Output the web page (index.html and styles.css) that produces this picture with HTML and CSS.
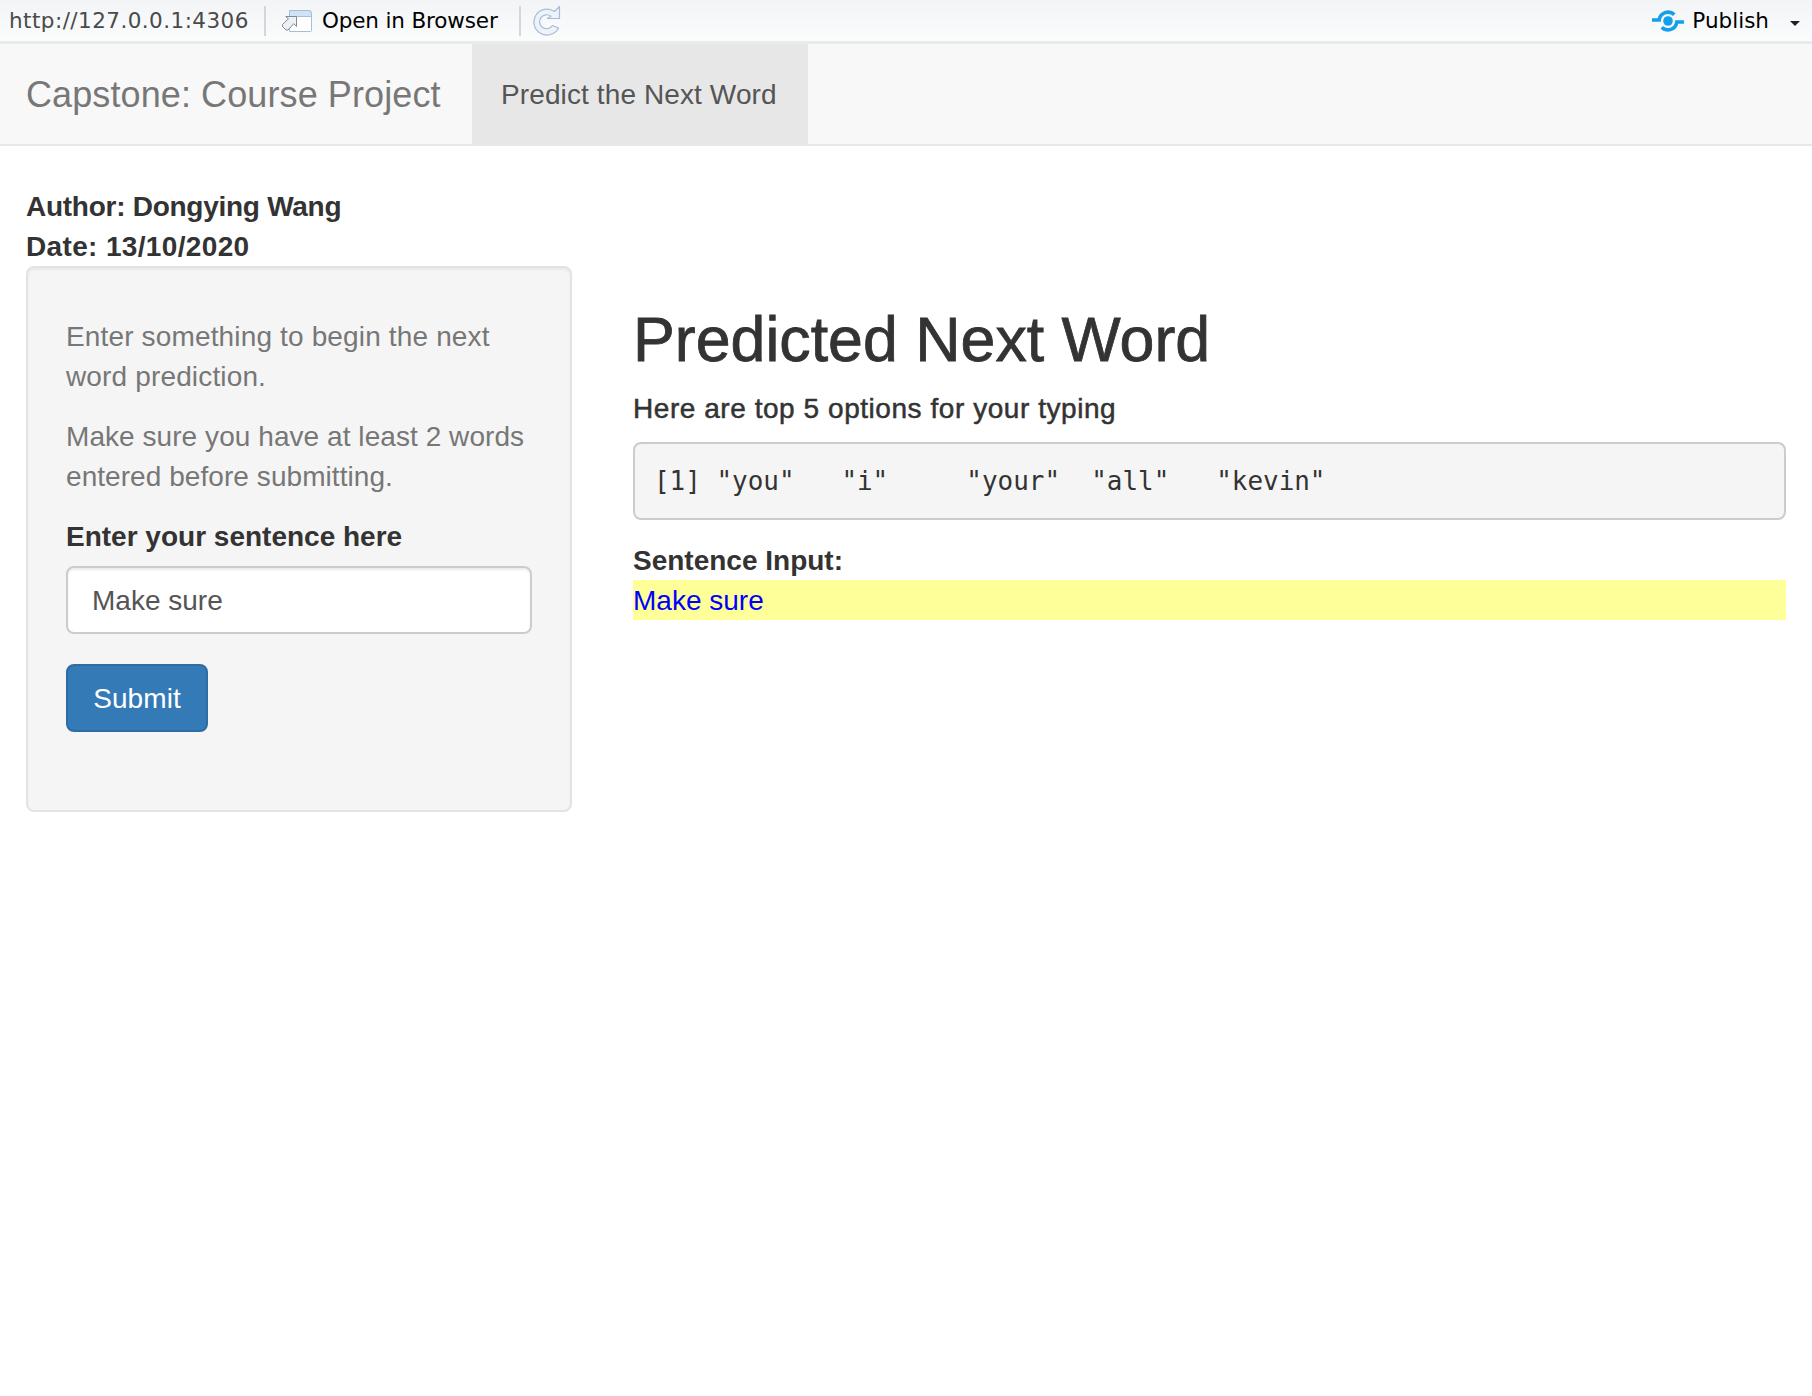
FILE: index.html
```html
<!DOCTYPE html>
<html lang="en">
<head>
    <meta charset="UTF-8">
    <meta name="viewport" content="width=device-width, initial-scale=1.0">
    <title>Capstone: Course Project</title>
    <link rel="stylesheet" href="styles.css">
</head>
<body>
    <div class="toolbar">
        <span class="url">http://127.0.0.1:4306</span>
        <span class="tool-sep"></span>
        <svg class="open-icon" width="31" height="24" viewBox="0 0 31 24">
            <path d="M8.500 1.500h19a3 3 0 0 1 3 3v17a1 1 0 0 1-1 1h-21z" fill="#fff" stroke="#a9bdd2"/>
            <path d="M8.500 1.500h19a3 3 0 0 1 3 3v3h-22z" fill="#cfe2f6" stroke="#a9bdd2"/>
            <path d="M15.500 7.500v10l-2.800-2.800-5.700 6.300h-2l-3.500-3.500v-2l6-5.700-2.800-2.300z" fill="#eef1f4" stroke="#7f8a96"/>
        </svg>
        <span class="open-label">Open in Browser</span>
        <span class="tool-sep tool-sep-2"></span>
        <svg class="reload-icon" width="30" height="31" viewBox="0 0 30 31">
            <path d="M26.500 23A13 13 0 1 1 22.500 6.500L27.500 1.500V13.500H15.500L19 11.300A7 7 0 1 0 20.500 20.500Z" fill="#eef3fa" stroke="#a6bcd8" stroke-width="1.200" stroke-linejoin="round"/>
        </svg>
        <span class="toolbar-gap"></span>
        <svg class="publish-icon" width="34" height="24" viewBox="0 0 34 24">
            <path d="M1 11h7.200A9 9 0 0 1 23.300 5.600" fill="none" stroke="#12a0ec" stroke-width="3.600"/>
            <path d="M33 13h-7.200A9 9 0 0 1 10.700 18.400" fill="none" stroke="#12a0ec" stroke-width="3.600"/>
            <circle cx="17" cy="12" r="4.800" fill="#12a0ec"/>
        </svg>
        <span class="publish-label">Publish</span>
        <span class="caret"></span>
    </div>

    <nav class="navbar">
        <span class="brand">Capstone: Course Project</span>
        <span class="nav-tab">Predict the Next Word</span>
    </nav>

    <div class="content">
        <div class="byline">
            <div class="author">Author: Dongying Wang</div>
            <div class="date">Date: 13/10/2020</div>
        </div>
        <div class="row">
            <aside class="sidebar">
                <p class="hint-first">Enter something to begin the next word prediction.</p>
                <p class="hint-second">Make sure you have at least 2 words entered before submitting.</p>
                <label class="field-label" for="sentence">Enter your sentence here</label>
                <input class="field" id="sentence" type="text" value="Make sure">
                <button class="submit" type="button">Submit</button>
            </aside>
            <main class="main">
                <h1>Predicted Next Word</h1>
                <h4>Here are top 5 options for your typing</h4>
                <pre class="output">[1] "you"   "i"     "your"  "all"   "kevin"</pre>
                <div class="sentence-title">Sentence Input:</div>
                <div class="sentence-value">Make sure</div>
            </main>
        </div>
    </div>
</body>
</html>
```

FILE: styles.css
```css
* {
    box-sizing: border-box;
}

body {
    font-family: "Liberation Sans", Arial, sans-serif;
    font-size: 28px;
    line-height: 40px;
    color: #333;
    background-color: #fff;
    margin: 0;
}

/* viewer toolbar */
.toolbar {
    display: flex;
    align-items: center;
    height: 44px;
    padding-left: 9px;
    background: linear-gradient(#f2f4f6, #fbfcfc);
    border-bottom: 3px solid #e8eaed;
    font-family: "DejaVu Sans", sans-serif;
    font-size: 21.500px;
    line-height: 1;
    color: #000;
}

.url {
    color: #4a4a4a;
    letter-spacing: 0.450px;
    width: 255px;
    flex: none;
}

.tool-sep {
    width: 2px;
    height: 30px;
    background-color: #d4d6d9;
    flex: none;
}

.tool-sep-2 {
    margin-left: 21px;
}

.open-icon {
    margin: 0 10px 0 15px;
    flex: none;
}

.open-label {
    letter-spacing: -0.150px;
}

.reload-icon {
    margin-left: 11px;
    flex: none;
}

.toolbar-gap {
    flex: 1;
}

.publish-label {
    margin-left: 7px;
}

.caret {
    width: 0;
    height: 0;
    margin: 5px 12px 0 21px;
    border-left: 5px solid transparent;
    border-right: 5px solid transparent;
    border-top: 5px solid #222;
}

/* app navbar */
.navbar {
    display: flex;
    height: 102px;
    background-color: #f8f8f8;
    border-bottom: 2px solid #e7e7e7;
}

.brand {
    width: 472px;
    padding-left: 26px;
    font-size: 36px;
    letter-spacing: 0.100px;
    line-height: 101px;
    color: #777;
}

.nav-tab {
    width: 336px;
    height: 102px;
    padding-left: 29px;
    background-color: #e7e7e7;
    color: #555;
    letter-spacing: 0.110px;
    line-height: 101px;
}

.content {
    padding: 40px 26px 0;
}

.byline {
    height: 80px;
    padding-top: 1px;
    font-weight: bold;
}

.author {
    letter-spacing: -0.270px;
}

.date {
    letter-spacing: 0.350px;
}

.row {
    display: grid;
    grid-template-columns: 546px 1153px;
    column-gap: 61px;
    align-items: start;
}

.sidebar {
    height: 546px;
    padding: 49px 38px 0;
    background-color: #f5f5f5;
    border: 2px solid #e3e3e3;
    border-radius: 8px;
    box-shadow: inset 0 2px 2px rgba(0, 0, 0, 0.05);
    color: #777;
}

.sidebar p {
    margin: 0 0 20px;
}

.hint-first {
    letter-spacing: 0.150px;
}

.hint-second {
    letter-spacing: 0.060px;
}

.field-label {
    display: block;
    margin-bottom: 9px;
    font-weight: bold;
    color: #333;
}

.field {
    display: block;
    width: 100%;
    height: 68px;
    padding: 2px 24px 0;
    background-color: #fff;
    border: 2px solid #ccc;
    border-radius: 8px;
    box-shadow: inset 0 2px 2px rgba(0, 0, 0, 0.075);
    font-family: inherit;
    font-size: 28px;
    color: #555;
}

.submit {
    display: block;
    height: 68px;
    width: 142px;
    margin-top: 30px;
    padding: 2px 0 0;
    background-color: #337ab7;
    border: 2px solid #2e6da4;
    border-radius: 8px;
    font-family: inherit;
    font-size: 28px;
    letter-spacing: 0.100px;
    color: #fff;
}

.main h1 {
    margin: 38px 0 15px;
    font-size: 62.700px;
    line-height: 70px;
    font-weight: normal;
    -webkit-text-stroke: 0.800px #333;
}

.main h4 {
    margin: 0 0 13px;
    font-size: 28px;
    line-height: 40px;
    letter-spacing: 0.550px;
    font-weight: normal;
    -webkit-text-stroke: 0.500px #333;
}

.output {
    height: 78px;
    margin: 0 0 20px;
    padding: 0 19px;
    background-color: #f5f5f5;
    border: 2px solid #ccc;
    border-radius: 8px;
    font-family: "DejaVu Sans Mono", monospace;
    font-size: 25.950px;
    line-height: 74px;
}

.sentence-title {
    height: 40px;
    padding-top: 1px;
    font-weight: bold;
}

.sentence-value {
    height: 40px;
    padding-top: 1px;
    background-color: #ff9;
    color: #00f;
}
```
